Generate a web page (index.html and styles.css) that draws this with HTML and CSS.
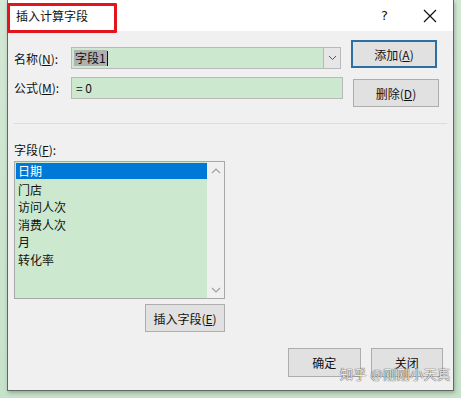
FILE: index.html
```html
<!DOCTYPE html>
<html lang="zh-CN">
<head>
  <meta charset="UTF-8">
  <title>插入计算字段</title>
  <link rel="stylesheet" href="styles.css">
</head>
<body>
  <div class="dialog">
    <div class="titlebar">
      <span class="title">插入计算字段</span>
      <span class="help">?</span>
      <span class="close">
        <svg width="14" height="14" viewBox="0 0 14 14"><path d="M1 1L13 13M13 1L1 13" stroke="#111" stroke-width="1.2" fill="none"/></svg>
      </span>
    </div>

    <div class="content">
      <div class="row row-name">
        <label class="lbl">名称(<u>N</u>):</label>
        <div class="combo">
          <span class="combo-text"><span class="sel">字段1</span><span class="caret"></span></span>
          <span class="combo-btn">
            <svg width="9" height="6" viewBox="0 0 9 6"><path d="M1 1L4.5 4.5L8 1" stroke="#555" stroke-width="1" fill="none"/></svg>
          </span>
        </div>
        <button class="btn btn-default">添加(<u>A</u>)</button>
      </div>

      <div class="row row-formula">
        <label class="lbl">公式(<u>M</u>):</label>
        <div class="input">= 0</div>
        <button class="btn btn-del">删除(<u>D</u>)</button>
      </div>

      <div class="sep"></div>

      <div class="fields">
        <label class="lbl">字段(<u>F</u>):</label>
        <div class="listbox">
          <ul class="items">
            <li class="active">日期</li>
            <li>门店</li>
            <li>访问人次</li>
            <li>消费人次</li>
            <li>月</li>
            <li>转化率</li>
          </ul>
          <div class="scroll">
            <svg width="10" height="6" viewBox="0 0 10 6"><path d="M1 5L5 1L9 5" stroke="#a0a0a0" stroke-width="1.2" fill="none"/></svg>
            <svg width="10" height="6" viewBox="0 0 10 6"><path d="M1 1L5 5L9 1" stroke="#a0a0a0" stroke-width="1.2" fill="none"/></svg>
          </div>
        </div>
        <button class="btn btn-insert">插入字段(<u>E</u>)</button>
      </div>

      <div class="footer">
        <button class="btn btn-foot">确定</button>
        <button class="btn btn-foot">关闭</button>
      </div>
    </div>

    <div class="mark"></div>
    <div class="watermark">知乎 @刚刚小天真</div>
  </div>
</body>
</html>
```

FILE: styles.css
```css
html, body {
  margin: 0;
  height: 100%;
}

body {
  background: linear-gradient(180deg, #d3e8d5 0%, #c7e2ca 100%);
  font-family: "Noto Sans CJK SC", "Microsoft YaHei", sans-serif;
  font-size: 12px;
  color: #111;
  overflow: hidden;
}

.dialog {
  position: relative;
  margin-left: 7px;
  width: 445px;
  height: 390px;
  background: #f0f0f0;
  border: 1px solid #5e6a60;
  border-top: none;
  box-shadow: 1px 2px 4px rgba(0, 0, 0, 0.25);
}

.titlebar {
  height: 31px;
  background: #fff;
  display: flex;
  align-items: center;
  padding-left: 8px;
}

.title {
  flex: 1;
  font-size: 12px;
  line-height: 14px;
  margin-top: 1px;
}

.help {
  width: 20px;
  font-size: 13px;
  margin-right: 22px;
  font-family: "DejaVu Sans", sans-serif;
}

.close {
  width: 14px;
  height: 14px;
  margin-right: 16px;
}

.content {
  padding: 9px 0 0 6px;
}

.row {
  display: flex;
}

.lbl {
  width: 57px;
  flex: none;
  line-height: 16px;
}

u {
  text-decoration-thickness: 1px;
  text-underline-offset: 1px;
}

.row-name .lbl {
  margin-top: 11px;
}

.combo {
  margin-top: 7px;
  width: 268px;
  height: 20px;
  border: 1px solid #b9b9b9;
  background: #cce8cf;
  display: flex;
}

.combo-text {
  flex: 1;
  display: flex;
  align-items: center;
  padding-left: 2px;
}

.sel {
  background: #b0b0b0;
  line-height: 16px;
  padding: 0 1px;
}

.caret {
  width: 1px;
  height: 15px;
  background: #111;
}

.combo-btn {
  width: 16px;
  background: #e6e6e6;
  border-left: 1px solid #b9b9b9;
  display: flex;
  align-items: center;
  justify-content: center;
}

.btn {
  font-family: inherit;
  font-size: 12px;
  color: #111;
  background: #e1e1e1;
  border: 1px solid #adadad;
  padding: 0;
  width: 86px;
  height: 28px;
  margin-left: 10px;
}

.btn-default {
  border: 2px solid #2d6ea3;
}

.row-formula {
  margin-top: 8px;
}

.row-formula .lbl {
  margin-top: 3px;
}

.input {
  width: 266px;
  height: 20px;
  border: 1px solid #b9b9b9;
  background: #cce8cf;
  padding-left: 4px;
  line-height: 20px;
}

.btn-del {
  margin-top: 2px;
}

.sep {
  margin: 16px 6px 0 0;
  height: 1px;
  background: #dcdcdc;
}

.fields {
  margin-top: 18px;
  display: flex;
  flex-direction: column;
  align-items: flex-start;
}

.listbox {
  margin-top: 3px;
  width: 209px;
  height: 136px;
  border: 1px solid #a8a8a8;
  background: #cce8cf;
  display: flex;
}

.items {
  list-style: none;
  margin: 0;
  padding: 1px 0 0 1px;
  flex: 1;
}

.items li {
  line-height: 17.6px;
  padding-left: 2px;
}

.items li.active {
  background: #0078d7;
  color: #fff;
  line-height: 16px;
  margin-bottom: 1.6px;
}

.scroll {
  width: 17px;
  background: #f0f0f0;
  display: flex;
  flex-direction: column;
  justify-content: space-between;
  align-items: center;
  padding: 6px 0 5px;
}

.btn-insert {
  margin: 5px 0 0 131px;
  width: 80px;
}

.footer {
  display: flex;
  margin: 16px 0 0 274px;
}

.btn-foot {
  width: 74px;
  height: 29px;
  margin-left: 0;
  margin-right: 10px;
}

.mark {
  position: absolute;
  left: -1px;
  top: 3px;
  width: 104px;
  height: 24px;
  border: 3px solid #e3141d;
  border-radius: 1px;
}

.watermark {
  position: absolute;
  left: 332px;
  top: 366px;
  font-size: 13px;
  line-height: 16px;
  white-space: nowrap;
  color: rgba(255, 255, 255, 0.9);
  letter-spacing: 0.5px;
  text-shadow: 0 0 1px #444, 0 0 1px #444;
}
```
